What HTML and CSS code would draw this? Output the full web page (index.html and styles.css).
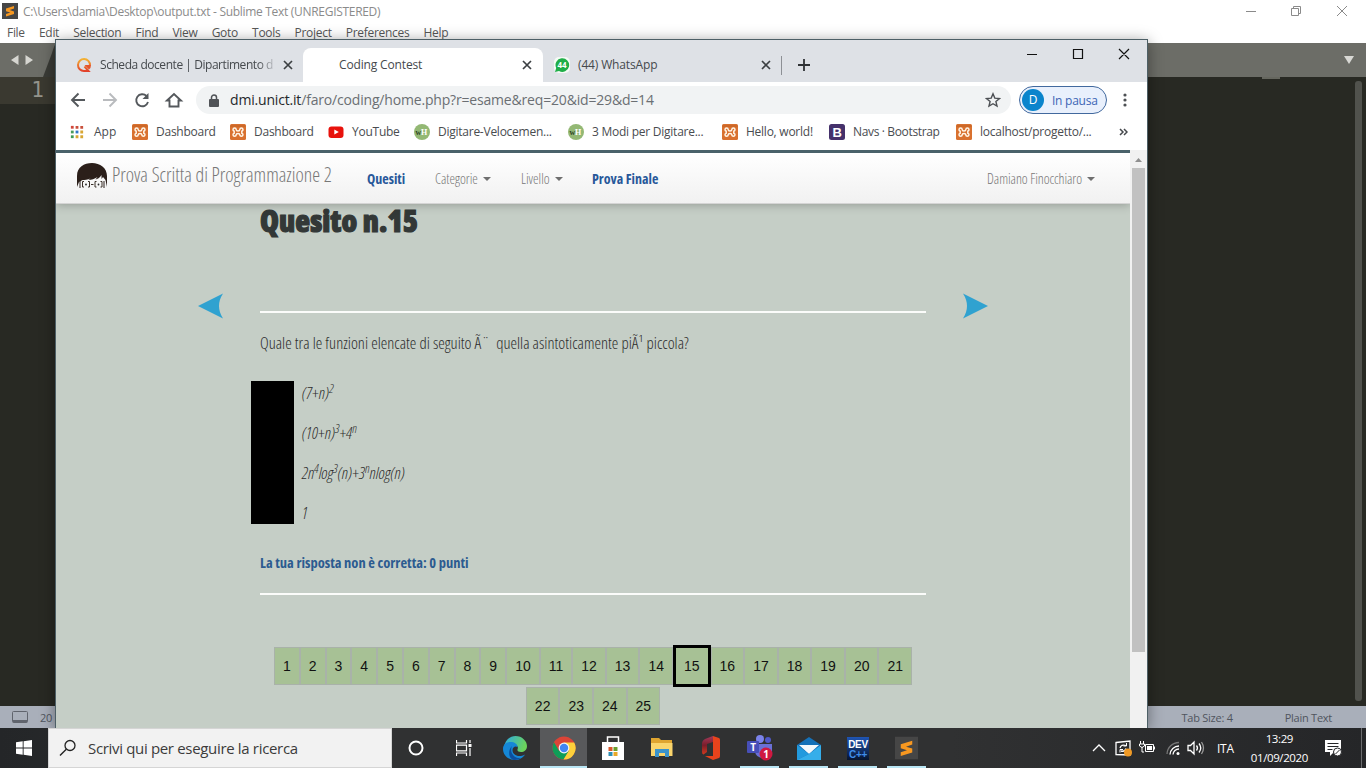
FILE: index.html
```html
<!DOCTYPE html>
<html lang="it">
<head>
<meta charset="utf-8">
<title>Coding Contest</title>
<link rel="stylesheet" href="styles.css">
</head>
<body>
<svg width="0" height="0" class="defs">
  <defs>
    <linearGradient id="gq" x1="0" y1="0" x2="0" y2="1"><stop offset="0" stop-color="#f3b233"/><stop offset="1" stop-color="#e2412b"/></linearGradient>
    <linearGradient id="ge" x1="0" y1="0" x2="1" y2="0.3"><stop offset="0" stop-color="#2aa9e8"/><stop offset="1" stop-color="#6bd35c"/></linearGradient>
    <linearGradient id="go" x1="0" y1="0" x2="0" y2="1"><stop offset="0" stop-color="#a33a5c"/><stop offset="0.5" stop-color="#7a1d2a"/><stop offset="1" stop-color="#d4391d"/></linearGradient>
    <linearGradient id="gd" x1="0" y1="0" x2="0" y2="1"><stop offset="0" stop-color="#1f55b4"/><stop offset="1" stop-color="#07142e"/></linearGradient>
    <symbol id="xampp" viewBox="0 0 16 16"><rect width="16" height="16" rx="1.500" fill="#d9712f"/><path d="M.500 2h15" stroke="#c06022"/><path d="M6.200 5.500a1.600 1.600 0 1 0-2 1.700v2a1.600 1.600 0 1 0 2 1.700q0-1.500 1.800-1.500t1.800 1.500a1.600 1.600 0 1 0 2-1.700v-2a1.600 1.600 0 1 0-2-1.700q0 1.500-1.800 1.500T6.200 5.500z" fill="none" stroke="#fff5e6" stroke-width="1.500"/></symbol>
    <symbol id="close" viewBox="0 0 10 10"><path d="M1 1l8 8M9 1L1 9" stroke="#3c4043" stroke-width="1.700" fill="none"/></symbol>
    <symbol id="sub" viewBox="0 0 24 24"><rect width="24" height="24" fill="#464646"/><path d="M6 8.200L18 4.400v4L11.500 10.600 18 12.600v4L6 20.400v-4l6.500-2L6 12.300z" fill="#f89820"/></symbol>
  </defs>
</svg>
<div class="desktop">

  <section class="sublime">
    <header class="s-title">
      <svg class="s-logo" viewBox="0 0 24 24"><use href="#sub"/></svg>
      <span>C:\Users\damia\Desktop\output.txt - Sublime Text (UNREGISTERED)</span>
      <svg class="s-ctl" width="104" height="12" viewBox="0 0 104 12"><path d="M1 6.500h10M46.500 3.500h7v7h-7zM48.500 3.500v-2h7v7h-2M92 1l10 10M102 1L92 11" fill="none" stroke="#8a8a8a"/></svg>
    </header>
    <nav class="s-menu"><span>File</span><span>Edit</span><span>Selection</span><span>Find</span><span>View</span><span>Goto</span><span>Tools</span><span>Project</span><span>Preferences</span><span>Help</span></nav>
    <div class="s-tabs">
      <svg width="56" height="34" viewBox="0 0 56 34"><path d="M56 0v34H43l9-24q2-7 4-10z" fill="#3a3b36"/><path d="M18.500 12v10l-7.500-5zM25.500 12v10l7.500-5z" fill="#d6d6d1"/></svg>
      <svg width="12" height="8" viewBox="0 0 12 8"><path d="M1 0h10L6 8z" fill="#d8d8d4"/></svg>
    </div>
    <div class="s-edit"><div class="s-line"><span>1</span></div><i class="s-mini"></i><i class="s-scroll"></i></div>
    <footer class="s-status">
      <svg width="16" height="12" viewBox="0 0 16 12"><rect x=".5" y=".5" width="15" height="11" rx="1" fill="none" stroke="#60646d"/><path d="M1 9h14v2.500H1z" fill="#60646d"/></svg>
      <span class="col">20</span><span class="tabsize">Tab Size: 4</span><span>Plain Text</span>
    </footer>
  </section>

  <section class="chrome">
    <header class="tabstrip">
      <div class="tab t1">
        <svg width="16" height="16" viewBox="0 0 16 16"><path d="M14 8.200A6 6 0 1 0 8 14h4.500L8.500 9.500" fill="none" stroke="url(#gq)" stroke-width="2"/><path d="M8.500 8h6.500q0 3-2 4.500z" fill="#e4532c"/></svg>
        <span class="fade">Scheda docente | Dipartimento d</span>
        <svg class="x" width="10" height="10"><use href="#close"/></svg>
      </div>
      <div class="tab t2"><span>Coding Contest</span><svg class="x" width="10" height="10"><use href="#close"/></svg></div>
      <div class="tab t3">
        <svg width="16" height="16" viewBox="0 0 16 16"><rect width="16" height="16" rx="5" fill="#f4fbf5"/><path d="M1 15l1.200-4A6.800 6.800 0 1 1 5 14z" fill="#1fae48"/><text x="8" y="11" text-anchor="middle" class="wa">44</text></svg>
        <span>(44) WhatsApp</span><svg class="x" width="10" height="10"><use href="#close"/></svg>
      </div>
      <svg class="plus" width="12" height="12" viewBox="0 0 12 12"><path d="M6 0v12M0 6h12" stroke="#2f3235" stroke-width="1.800"/></svg>
      <svg class="winctl" width="104" height="12" viewBox="0 0 104 12"><path d="M1 6.500h10M47.500 1.500h9v9h-9zM93 1l10 10M103 1L93 11" fill="none" stroke="#111" stroke-width="1.200"/></svg>
    </header>

    <div class="toolbar">
      <svg class="navi" width="114" height="18" viewBox="0 0 114 18"><g fill="none" stroke="#54585c" stroke-width="1.900"><path d="M15 9H2M8.500 2.500L2 9l6.500 6.500"/><path d="M33 9h13M39.500 2.500L46 9l-6.500 6.500" stroke="#b9bbbe"/><path d="M76.500 5A6 6 0 1 0 78 11"/><path d="M97 9.500l7-6.500 7 6.500h-2.500v6h-9v-6z"/></g><path d="M78.500 2v6h-6z" fill="#54585c"/></svg>
      <div class="omni">
        <svg width="10" height="13" viewBox="0 0 10 13"><rect y="5" width="10" height="8" rx="1" fill="#505357"/><path d="M2.500 5.500V3.500a2.500 2.500 0 0 1 5 0v2" fill="none" stroke="#505357" stroke-width="1.500"/></svg>
        <span class="url"><b>dmi.unict.it</b>/faro/coding/home.php?r=esame&amp;req=20&amp;id=29&amp;d=14</span>
        <svg class="star" width="16" height="16" viewBox="0 0 16 16"><path d="M8 1.800l1.800 4.300 4.700.400-3.600 3 1.100 4.600L8 11.700l-4 2.400 1.100-4.600-3.600-3 4.700-.400z" fill="none" stroke="#4d5054" stroke-width="1.400"/></svg>
      </div>
      <div class="profile"><span class="avatar">D</span><span>In pausa</span></div>
      <svg width="4" height="14" viewBox="0 0 4 14"><g fill="#4d5054"><circle cx="2" cy="2" r="1.600"/><circle cx="2" cy="7" r="1.600"/><circle cx="2" cy="12" r="1.600"/></g></svg>
    </div>

    <div class="bookmarks">
      <div class="bm b1"><svg viewBox="0 0 16 16"><path d="M1 1h3.200v3.200H1z" fill="#d0473a"/><path d="M6.400 1h3.200v3.200H6.400zM11.800 1H15v3.200h-3.200z" fill="#c9503c"/><path d="M1 6.400h3.200v3.200H1z" fill="#4a9a5a"/><path d="M6.400 6.400h3.200v3.200H6.400z" fill="#2f77c8"/><path d="M11.800 6.400H15v3.200h-3.200zM11.800 11.800H15V15h-3.200zM6.400 11.800h3.200V15H6.400z" fill="#d8a634"/><path d="M1 11.800h3.200V15H1z" fill="#3f9a55"/></svg><span>App</span></div>
      <div class="bm b2"><svg><use href="#xampp"/></svg><span>Dashboard</span></div>
      <div class="bm b2"><svg><use href="#xampp"/></svg><span>Dashboard</span></div>
      <div class="bm b3"><svg viewBox="0 0 16 16"><rect x=".5" y="2.500" width="15" height="11.500" rx="3" fill="#e8120c"/><path d="M6.300 5.500v5l4.500-2.500z" fill="#fff"/></svg><span>YouTube</span></div>
      <div class="bm b4"><svg viewBox="0 0 16 16"><circle cx="8" cy="8" r="8" fill="#93b874"/><text x="1.500" y="11" class="wh"><tspan fill="#2e4426">w</tspan><tspan fill="#fff">H</tspan></text></svg><span>Digitare-Velocemen...</span></div>
      <div class="bm b4"><svg viewBox="0 0 16 16"><circle cx="8" cy="8" r="8" fill="#93b874"/><text x="1.500" y="11" class="wh"><tspan fill="#2e4426">w</tspan><tspan fill="#fff">H</tspan></text></svg><span>3 Modi per Digitare...</span></div>
      <div class="bm b5"><svg><use href="#xampp"/></svg><span>Hello, world!</span></div>
      <div class="bm b6"><svg viewBox="0 0 16 16"><rect width="16" height="16" rx="2.500" fill="#45316b"/><text x="8" y="13" text-anchor="middle" class="bs">B</text></svg><span>Navs · Bootstrap</span></div>
      <div class="bm b7"><svg><use href="#xampp"/></svg><span>localhost/progetto/...</span></div>
      <svg class="more" width="9" height="8" viewBox="0 0 9 8"><path d="M1 1l3 3-3 3M5 1l3 3-3 3" fill="none" stroke="#45484c" stroke-width="1.500"/></svg>
    </div>

    <div class="viewport">
      <main class="page">
        <nav class="navbar">
          <svg class="face" width="32" height="26" viewBox="0 0 32 26"><path d="M1 24V13C1 4 8 0 16 0s15 5 15 13v11l-1.500-7-2.500-3-1.500 2v-4c-2 3-4 4-6 4.500l2-2.500c-3 2-6 3-9 3l2-1.500c-3 1-6 1.500-8 1.500L3 19z" fill="#2b1f1a"/><path d="M4 18v7M28 18v7" stroke="#2b1f1a" stroke-width="1"/><path d="M8 18.500H6.500V24H8M12 18.500h1.500V24H12M20.500 18.500H19V24h1.500M24.500 18.500H26V24h-1.500M15 21.500h2.500" fill="none" stroke="#3a3029" stroke-width="1"/><circle cx="10" cy="21.500" r=".9" fill="#222"/><circle cx="22.500" cy="21.500" r=".9" fill="#222"/></svg>
          <span class="brand">Prova Scritta di Programmazione 2</span>
          <a class="act n1">Quesiti</a><a class="n2">Categorie<i></i></a><a class="n3">Livello<i></i></a><a class="act">Prova Finale</a><a class="user">Damiano Finocchiaro<i></i></a>
        </nav>
        <div class="quiz">
          <svg class="arrow" width="26" height="26" viewBox="0 0 26 26"><path d="M1 13L26 .500q-8 12.500 0 25z" fill="#30a2d0"/></svg>
          <article>
            <h1>Quesito n.15</h1>
            <hr>
            <p class="ask">Quale tra le funzioni elencate di seguito Ã¨ &nbsp;quella asintoticamente piÃ¹ piccola?</p>
            <div class="answers">
              <div class="mask"></div>
              <ul>
                <li>(7+n)<sup>2</sup></li>
                <li>(10+n)<sup>3</sup>+4<sup>n</sup></li>
                <li>2n<sup>4</sup>log<sup>3</sup>(n)+3<sup>n</sup>nlog(n)</li>
                <li>1</li>
              </ul>
            </div>
            <p class="result">La tua risposta non è corretta: 0 punti</p>
            <hr>
            <div class="pager"><a>1</a><a>2</a><a>3</a><a>4</a><a>5</a><a>6</a><a>7</a><a>8</a><a>9</a><a>10</a><a>11</a><a>12</a><a>13</a><a>14</a><a class="cur">15</a><a>16</a><a>17</a><a>18</a><a>19</a><a>20</a><a>21</a></div>
            <div class="pager"><a>22</a><a>23</a><a>24</a><a>25</a></div>
          </article>
          <svg class="arrow" width="26" height="26" viewBox="0 0 26 26"><path d="M25 13L0 .500q8 12.500 0 25z" fill="#30a2d0"/></svg>
        </div>
      </main>
      <div class="scroll"><svg width="17" height="18" viewBox="0 0 17 18"><path d="M5 12l3.500-4 3.500 4z" fill="#8f8f8f"/></svg><div></div></div>
    </div>
  </section>

  <footer class="taskbar">
    <div class="start"><svg width="16" height="16" viewBox="0 0 16 16"><path d="M0 2.200L6.700 1.300v6.300H0zM7.600 1.200L16 0v7.600H7.600zM0 8.500h6.700v6.300L0 13.800zM7.600 8.500H16V16l-8.400-1.200z" fill="#fff"/></svg></div>
    <div class="search"><svg width="18" height="18" viewBox="0 0 18 18"><circle cx="11" cy="6.500" r="5" fill="none" stroke="#222" stroke-width="1.300"/><path d="M7.300 10.200L1 16.500" stroke="#222" stroke-width="1.400"/></svg><span>Scrivi qui per eseguire la ricerca</span></div>
    <div class="app cortana"><svg width="16" height="16" viewBox="0 0 16 16"><circle cx="8" cy="8" r="6.500" fill="none" stroke="#fff" stroke-width="2"/></svg></div>
    <div class="app view"><svg width="16" height="16" viewBox="0 0 16 16"><path d="M.500 0v3h10V0M.500 16v-3h10v3M.500 5.200h10v5.600H.500zM14 0v3M14 8v8" fill="none" stroke="#fff" stroke-width="1.200"/><path d="M12.500 4h3v3h-3z" fill="#fff"/></svg></div>
    <div class="app"><svg width="24" height="24" viewBox="0 0 24 24"><path d="M1 11C2 4 7 0 12.500 0 19 0 24 5 24 10c0 4-3 6-6 6-2.500 0-4-1-3.500-2.500C16 10 13 8 10 8z" fill="url(#ge)"/><path d="M0 13C0 8 4 6 7.500 6c4 0 7 2 7 5-2-1.500-5 0-5 3 0 5 6 8 12.500 4.500C20 22 16 24 12 24 5 24 0 19 0 13z" fill="#1587d6"/><path d="M9 10c-3 6 2 13 9 12-2 1.300-4 2-6 2-6 0-8-9-3-14z" fill="#0c4e9c"/></svg></div>
    <div class="app sel on"><svg width="24" height="24" viewBox="0 0 24 24"><circle cx="12" cy="12" r="11.500" fill="#db4437"/><path d="M2 6.300A11.500 11.500 0 0 0 11.500 23.500L17 15l-10-.200z" fill="#0f9d58"/><path d="M12 6.500h10.200A11.500 11.500 0 0 1 11.500 23.500L17 14.500z" fill="#fdd03b"/><circle cx="12" cy="12" r="5.400" fill="#f5f5f5"/><circle cx="12" cy="12" r="4.200" fill="#4285f4"/></svg></div>
    <div class="app"><svg width="22" height="24" viewBox="0 0 22 24"><path d="M5.500 9V1h11v8" fill="none" stroke="#fff" stroke-width="1.500"/><path d="M0 6h22v18H0z" fill="#fff"/><path d="M6.500 11h4v4h-4z" fill="#d9572b"/><path d="M11.500 11h4v4h-4z" fill="#6ba02e"/><path d="M6.500 16h4v4h-4z" fill="#2f8fb5"/><path d="M11.500 16h4v4h-4z" fill="#e9a928"/></svg></div>
    <div class="app"><svg width="22" height="20" viewBox="0 0 22 20"><path d="M0 0h8l2 2h11v5H0z" fill="#dfa530"/><path d="M0 5h21.500v13H0z" fill="#fad56c"/><path d="M4 19v-8h14v8h-4v-4H8v4z" fill="#3b93ca"/></svg></div>
    <div class="app"><svg width="18" height="24" viewBox="0 0 18 24"><path d="M11 0L3 3Q0 4.500 0 8v8q0 2 1.500 2.500L5 16V8l6-2z" fill="url(#go)"/><path d="M11 0l6 2q1 .500 1 2v16q0 1.500-1 2l-6 2-8-4h8z" fill="#e8431c"/></svg></div>
    <div class="app on"><svg width="28" height="26" viewBox="0 0 28 26"><circle cx="14" cy="4" r="4" fill="#7b83eb"/><circle cx="22" cy="5" r="3" fill="#5059c9"/><path d="M9 9h17v7q0 6-8 7-9 0-9-8z" fill="#6a71d6"/><rect x="1" y="6" width="12" height="12" rx="1" fill="#474fb8"/><text x="7" y="16" text-anchor="middle" class="tm">T</text><circle cx="20" cy="19" r="6.500" fill="#cf1840"/><text x="20" y="23" text-anchor="middle" class="tm">1</text></svg></div>
    <div class="app on"><svg width="24" height="23" viewBox="0 0 24 23"><path d="M0 8L12 0l12 8v15H0z" fill="#1571b8"/><path d="M2 8h20l-10 9z" fill="#f5f9fc"/><path d="M0 8l12 9L0 23z" fill="#229ade"/><path d="M24 8l-12 9-12 6h24z" fill="#35aeea"/></svg></div>
    <div class="app on"><svg width="22" height="23" viewBox="0 0 22 23"><rect width="22" height="23" fill="url(#gd)"/><text x="11" y="11" text-anchor="middle" class="dev" fill="#fff">DEV</text><text x="11" y="21" text-anchor="middle" class="dev" fill="#3f8dea">C++</text></svg></div>
    <div class="app on"><svg width="23" height="24" viewBox="0 0 24 24"><use href="#sub"/></svg></div>
    <div class="tray">
      <svg width="138" height="18" viewBox="0 0 138 18"><g fill="none" stroke="#fff" stroke-width="1.300"><path d="M1 12l6-6 6 6"/><path d="M24 3.500l14-1.500v14l-14-.500zM28 9q1-4 6-2.500M34 9.500q-1 3.500-5 2.500"/><path d="M34.500 4v3h-3M28 13.500v-3h3" stroke-width="1"/><path d="M48.500 2v3M51.500 2v3M47.500 5h5v2q-2.500 3-5 0zM50 8v5h2" stroke-width="1"/><path d="M53.500 5.500h8v7h-8zM62.500 7.500v3" stroke-width="1"/><path d="M75 15A12 12 0 0 1 87 3.500" stroke="#777"/><path d="M78 15.500A9 9 0 0 1 87 7M81 15.500a6 6 0 0 1 6-5.500"/><path d="M96 6.500h2.500L102 3v12l-3.500-3.500H96zM104.500 6.500q2 2.500 0 5M107 4.500q3.500 4.500 0 9"/><path d="M109.500 3q4 6 0 12" stroke="#999"/></g><path d="M55 7h5v4h-5z" fill="#fff"/><circle cx="86" cy="14.500" r="1.500" fill="#fff"/><circle cx="36" cy="13.500" r="4" fill="#f09a26"/></svg>
      <span class="lang">ITA</span>
      <div class="clock"><span>13:29</span><span>01/09/2020</span></div>
      <svg class="notif" width="17" height="17" viewBox="0 0 17 17"><path d="M0 0h16v12H9l-4 4v-4H0z" fill="#fff"/><path d="M2.500 3.500h11M2.500 6.500h11M2.500 9.500h5" stroke="#252628" stroke-width="1"/><circle cx="12.500" cy="12" r="4" fill="#fff" stroke="#252628"/><path d="M10.500 14l4-4" stroke="#252628"/></svg>
    </div>
  </footer>
</div>
</body>
</html>
```
FILE: styles.css
```css
* { box-sizing: border-box; }
body { margin: 0; font: 12px "Open Sans", sans-serif; letter-spacing: -.25px; }
svg { flex: none; display: block; }
span { white-space: nowrap; }
.defs { position: absolute; }
.desktop { position: relative; width: 1366px; height: 768px; overflow: hidden; background: #282923; }

/* editor window */
.sublime { height: 728px; display: flex; flex-direction: column; background: #fff; }
.s-title { height: 22px; display: flex; align-items: center; padding: 0 17px 0 2px; color: #8b8b8b; letter-spacing: -.3px; }
.s-logo { width: 16px; height: 16px; margin-right: 5px; }
.s-ctl { margin-left: auto; }
.s-menu { height: 21px; display: flex; align-items: center; padding: 0 7px 0; color: #575757; letter-spacing: -.3px; }
.s-menu span { margin-right: 14.200px; }
.s-tabs { height: 34px; background: #6c6d67; display: flex; justify-content: space-between; align-items: center; padding-right: 11px; }
.s-edit { flex: 1; position: relative; background: #282923; }
.s-line { width: 56px; height: 27px; padding: 0 12px; background: #3a3930; text-align: right; font: 21px/27px "DejaVu Sans Mono", monospace; letter-spacing: 0; color: #94948b; }
.s-mini { position: absolute; left: 1262px; top: 0; width: 18px; height: 2px; background: #66675f; }
.s-scroll { position: absolute; right: 4px; top: 4px; width: 7px; height: 620px; background: #51524d; border-radius: 3px; }
.s-status { height: 22px; display: flex; align-items: center; padding: 0 34px 0 12px; background: #a9afba; color: #50555e; font-size: 11px; }
.s-status .col { margin-left: 12px; }
.s-status .tabsize { margin-left: auto; margin-right: 52px; }

/* browser window */
.chrome { position: absolute; left: 55px; top: 39px; width: 1093px; height: 689px; display: flex; flex-direction: column; background: #fff; border: 1px solid #4d5f66; border-bottom: 0; box-shadow: 0 2px 14px rgba(0,0,0,.4); }
.tabstrip { height: 42px; background: #dee1e6; display: flex; position: relative; color: #45494d; }
.tab { height: 34px; margin-top: 8px; display: flex; align-items: center; letter-spacing: -.15px; }
.tab span { margin-top: -1px; }
.tab .x { margin-left: auto; }
.t1 { width: 247px; padding: 0 10px 0 20px; gap: 8px; letter-spacing: -.45px; }
.t2 { width: 240px; padding: 0 11px 0 36px; background: #fff; border-radius: 8px 8px 0 0; }
.t3 { width: 239px; padding: 0 11px 0 11px; gap: 8px; position: relative; }
.t1 .fade { -webkit-mask-image: linear-gradient(90deg, #000 158px, transparent 178px); mask-image: linear-gradient(90deg, #000 158px, transparent 178px); }
.t3::after { content: ""; position: absolute; right: 0; top: 8px; width: 1px; height: 19px; background: #8d9095; }
.plus { margin: 19px 0 0 16px; }
.winctl { margin: 8px 17px 0 auto; }
.wa { font: 700 8px "Open Sans", sans-serif; fill: #fff; }
.wh { font: 700 8px "Liberation Serif", serif; }
.bs { font: 700 13px "Liberation Sans", sans-serif; fill: #fff; }
.toolbar { height: 36px; display: flex; align-items: center; padding: 0 20px 0 14px; }
.omni { width: 815px; height: 28px; margin: 0 8px 0 12px; padding: 0 10px 0 13px; border-radius: 14px; background: #f1f3f4; display: flex; align-items: center; }
.url { margin: -1px 0 0 11px; font-size: 14px; letter-spacing: -.18px; color: #6b6f73; }
.url b { font-weight: 400; color: #25282b; }
.star { margin-left: auto; }
.profile { width: 88px; height: 28px; border: 1px solid #42699e; border-radius: 14px; background: #e9f0fc; display: flex; align-items: center; gap: 8px; padding-left: 2px; color: #3d65b5; margin-right: 16px; }
.avatar { width: 22px; height: 22px; border-radius: 50%; background: #0a84cc; color: #fff; line-height: 22px; text-align: center; }
.bookmarks { height: 32px; display: flex; align-items: center; padding: 0 19px 4px 14px; color: #494c50; }
.bm { display: flex; align-items: center; gap: 8px; }
.bm span { margin-top: -1px; }
.bm svg { width: 16px; height: 16px; }
.b1 { width: 62px; letter-spacing: 0; } .b1 svg { width: 14px; height: 14px; margin: 0 2px 0 0; }
.b2 { width: 98px; } .b3 { width: 86px; } .b4 { width: 154px; } .b5 { width: 107px; } .b6 { width: 127px; letter-spacing: -.35px; } .b7 { width: 150px; }
.more { margin-left: auto; }

/* page */
.viewport { flex: 1; display: flex; min-height: 0; }
.page { width: 1074px; background: #c5cec6; overflow: hidden; font-stretch: 75%; letter-spacing: 0; }
.navbar { height: 54px; border-top: 3px solid #4a626a; display: flex; padding: 0 35px 0 20px; position: relative; background: linear-gradient(#fff, #f1f1f1); box-shadow: 0 1px 9px rgba(0,0,0,.25); border-bottom: 1px solid #d4d4d4; color: #777; }
.face { margin-top: 10px; }
.brand { margin-left: 4px; width: 255px; font-size: 19.800px; font-weight: 300; line-height: 44px; }
.navbar a { font-size: 14px; font-weight: 300; line-height: 52px; white-space: nowrap; }
.navbar a.act { font-weight: 700; color: #28589a; }
.navbar a i { display: inline-block; border: 4px solid transparent; border-top-color: #6f6f6f; border-bottom: 0; margin-left: 5px; vertical-align: 3px; }
.n1 { width: 68px; } .n2 { width: 86px; } .n3 { width: 71px; }
.navbar .user { margin-left: auto; letter-spacing: -.06px; }
.quiz { display: flex; justify-content: center; gap: 37px; }
.arrow { margin-top: 89px; }
article { width: 666px; }
h1 { margin: 0; font-size: 30.500px; font-weight: 800; line-height: 32px; height: 107px; color: #333837; letter-spacing: .12px; -webkit-text-stroke: 1.2px #333837; }
hr { margin: 0; border: 0; height: 2px; background: #fbfcfa; }
.ask { margin: 18px 0 0; font-size: 16.500px; letter-spacing: .02px; font-weight: 300; line-height: 24px; color: #2c2c2c; white-space: nowrap; }
.answers { display: flex; gap: 8px; margin: 26px 0 0 -9px; }
.mask { width: 43px; height: 143px; background: #000; }
.answers ul { margin: -8px 0 0; padding: 0; list-style: none; font-size: 16.500px; font-weight: 300; font-style: italic; color: #2c2c2c; }
.answers li { height: 40px; line-height: 40px; white-space: nowrap; }
.answers sup { font-size: 75%; line-height: 0; position: relative; top: -.5em; vertical-align: baseline; }
.result { margin: 18px 0 18px; font-size: 14.500px; font-weight: 700; line-height: 24px; color: #2c5b90; }
.pager { display: flex; justify-content: center; align-items: center; }
hr + .pager { margin-top: 50px; }
.pager a { height: 38px; padding: 0 8px; border: 1px solid #a9b2a9; background: #a7c195; color: #111; font: 14px/36px "Liberation Sans", sans-serif; }
.pager .cur { height: 42px; border: 3px solid #000; }
.scroll { width: 17px; background: #f1f1f1; }
.scroll div { width: 13px; height: 484px; margin: 0 2px; background: #c1c1c1; }

/* taskbar */
.taskbar { position: absolute; left: 0; right: 0; bottom: 0; height: 40px; display: flex; background: linear-gradient(90deg, #242628, #303132 400px, #303132 950px, #252628); }
.start { width: 48px; display: grid; place-items: center; }
.search { width: 344px; background: #f2f2f2; border: 1px solid #d5d5d5; display: flex; align-items: center; gap: 11px; padding-left: 10px; font-size: 15px; letter-spacing: -.33px; color: #3b3b3b; }
.app { width: 49px; display: grid; place-items: center; position: relative; }
.cortana { padding-right: 2px; }
.view { padding-right: 3px; }
.sel { background: linear-gradient(90deg, transparent 1px, #58595b 1px, #58595b 48px, transparent 48px); }
.on::after { content: ""; position: absolute; left: 5px; right: 5px; bottom: 0; height: 2px; background: #b9e6f5; }
.sel::after { left: 1px; right: 1px; }
.tm { font: 700 10px "Open Sans", sans-serif; fill: #fff; }
.dev { font: 700 10px "Liberation Sans", sans-serif; letter-spacing: -.3px; }
.tray { margin-left: auto; padding-right: 4px; width: 274px; display: flex; align-items: center; color: #fff; }
.lang { margin-left: -13px; width: 34px; }
.clock { width: 58px; text-align: center; display: flex; flex-direction: column; line-height: 19px; font-size: 11.500px; letter-spacing: -.4px; }
.notif { margin: 0 19px 0 17px; }
.tray::after { content: ""; width: 1px; height: 40px; background: #6b6c6e; }
```
